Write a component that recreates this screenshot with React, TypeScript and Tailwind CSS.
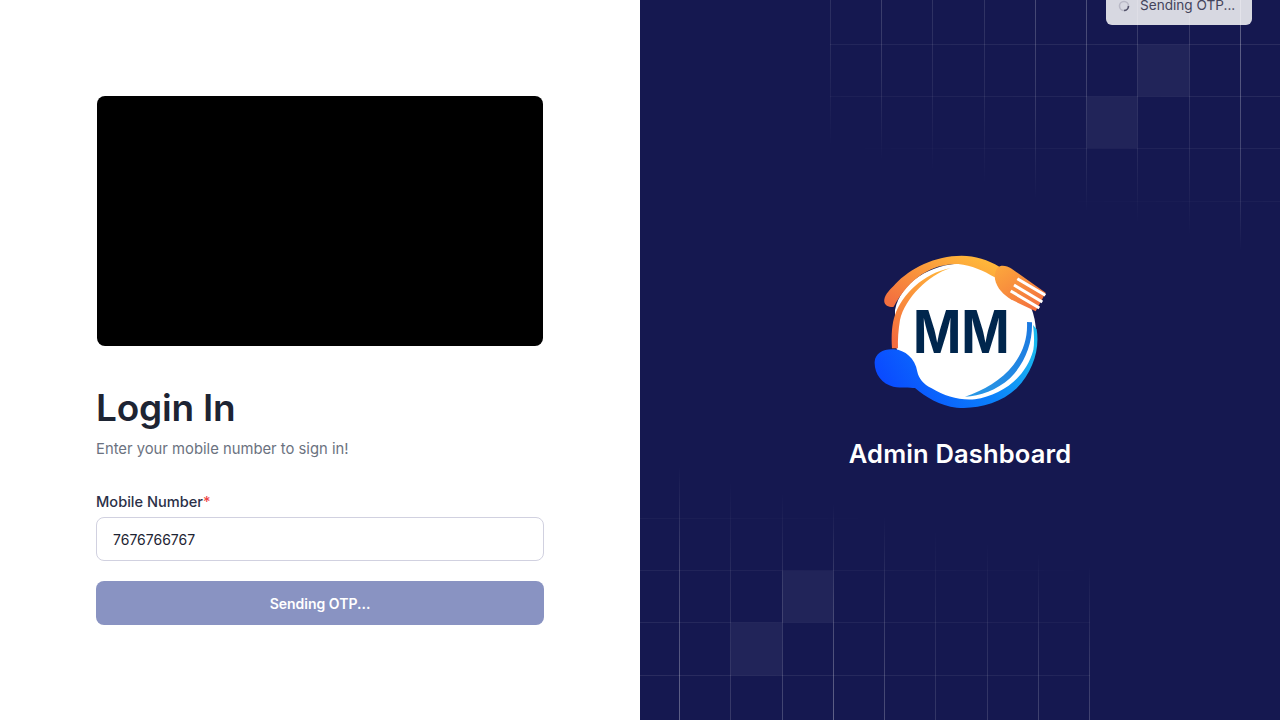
const font = "font-['Inter','Noto_Sans',sans-serif]";

function GridLines({ xs, ys, x0, x1, y0, y1, grad, id, alphas }: { xs: number[]; ys: number[]; x0: number; x1: number; y0: number; y1: number; grad: [number, number, number, number]; id: string; alphas: number[] }) {
  const w = x1 - x0;
  const h = y1 - y0;
  return (
    <svg className="absolute pointer-events-none" style={{ left: x0 - 640, top: y0 }} width={w} height={h} viewBox={`${x0} ${y0} ${w} ${h}`}>
      <defs>
        <linearGradient id={`${id}g`} gradientUnits="userSpaceOnUse" x1={grad[0]} y1={grad[1]} x2={grad[2]} y2={grad[3]}>
          <stop offset="0" stopColor="white" />
          <stop offset="0.55" stopColor="white" stopOpacity="0.6" />
          <stop offset="1" stopColor="white" stopOpacity="0" />
        </linearGradient>
        <mask id={`${id}m`} maskUnits="userSpaceOnUse" x={x0} y={y0} width={w} height={h}>
          <rect x={x0} y={y0} width={w} height={h} fill={`url(#${id}g)`} />
        </mask>
      </defs>
      <g mask={`url(#${id}m)`} shapeRendering="crispEdges">
        {xs.map((x, i) => (
          <line key={x} x1={x + 0.5} x2={x + 0.5} y1={y0} y2={y1} stroke="white" strokeOpacity={alphas[i]} />
        ))}
        {ys.map((y) => (
          <line key={y} x1={x0} x2={x1} y1={y + 0.5} y2={y + 0.5} stroke="white" strokeOpacity={0.09} />
        ))}
      </g>
    </svg>
  );
}

function Square({ x, y, w, h }: { x: number; y: number; w: number; h: number }) {
  return (
    <svg className="absolute pointer-events-none" style={{ left: x - 640, top: y }} width={w} height={h}>
      <rect width={w} height={h} fill="white" fillOpacity="0.055" />
    </svg>
  );
}

function Logo() {
  return (
    <svg width="200" height="180" viewBox="0 0 600 540" className="block">
      <defs>
        <linearGradient id="org" x1="0.05" y1="0.9" x2="0.8" y2="0.05">
          <stop offset="0" stopColor="#f36f3f" />
          <stop offset="1" stopColor="#ffb63a" />
        </linearGradient>
        <linearGradient id="org2" x1="0.3" y1="1" x2="0.7" y2="0">
          <stop offset="0" stopColor="#f46c3e" />
          <stop offset="1" stopColor="#ffb13a" />
        </linearGradient>
        <linearGradient id="fork" x1="0.1" y1="0" x2="0.8" y2="1">
          <stop offset="0" stopColor="#fca63c" />
          <stop offset="1" stopColor="#f36f3f" />
        </linearGradient>
        <linearGradient id="blu" x1="0" y1="0.6" x2="1" y2="0.3">
          <stop offset="0" stopColor="#0a48ff" />
          <stop offset="0.6" stopColor="#0b82fa" />
          <stop offset="1" stopColor="#1ab9ee" />
        </linearGradient>
        <linearGradient id="blu2" x1="0" y1="1" x2="1" y2="0">
          <stop offset="0" stopColor="#2a9ae6" />
          <stop offset="1" stopColor="#1b78e0" />
        </linearGradient>
      </defs>
      <path d="M105 210 C120 130 210 70 315 70 C430 70 528 160 528 280 C528 400 430 490 315 490 C200 490 105 400 105 280 Z" fill="white" />
      <path d="M73 178 C76 160 92 148 106 132 C150 85 225 47 305 47 C345 47 385 60 418 80 L404 112 C370 92 335 76 295 72 C220 70 150 110 101 200 C85 204 70 195 73 178 Z" fill="url(#org)" />
      <path d="M272 84 C205 105 135 175 120 240 C115 270 113 300 114 325 L96 325 C93 285 96 250 105 225 C125 165 190 100 272 84 Z" fill="url(#org2)" />
      <path d="M412 84 C424 72 440 78 455 86 L557 158 L527 214 L452 178 C432 165 410 145 405 118 C403 104 406 92 412 84 Z" fill="url(#fork)" />
      <path d="M472 116 L556 166 M462 135 L547 186 M452 153 L538 204" stroke="white" strokeWidth="9" fill="none" />
      <path d="M44 365 C46 340 70 326 102 328 C135 330 165 355 172 395 C176 415 190 432 215 445 C255 470 300 482 345 478 C420 465 495 420 520 330 C523 310 523 285 519 255 L530 268 C540 330 518 395 470 445 C420 492 350 508 290 503 C240 498 195 470 165 444 C150 442 125 445 100 440 C65 432 42 400 44 365 Z" fill="url(#blu)" />
      <path d="M501 246 L516 247 C518 310 495 370 450 415 C410 450 360 470 315 470 C370 452 425 420 460 375 C490 335 503 295 501 246 Z" fill="url(#blu2)" />
      <text x="304" y="340" textAnchor="middle" fill="#00264d" fontFamily="'Inter',sans-serif" fontWeight="700" fontSize="176" textLength="290" lengthAdjust="spacingAndGlyphs">MM</text>
    </svg>
  );
}

export default function App() {
  return (
    <div className={`flex w-[1280px] h-[720px] overflow-hidden bg-white ${font}`}>
      <div className="w-[640px] h-full flex flex-col px-24 pt-24">
        <div className="mx-px h-[250px] bg-black rounded-lg" />
        <h1 className="mt-[38px] text-[37px] leading-[48px] font-semibold text-[#1d2433] tracking-[-0.2px]">Login In</h1>
        <p className="mt-[5px] text-[14.8px] leading-[24px] text-[#6b7280]">Enter your mobile number to sign in!</p>
        <label className="mt-[30px] text-[14.6px] leading-[22px] font-medium text-[#2b3048]">
          Mobile Number<span className="text-[#ef4444]">*</span>
        </label>
        <input
          readOnly
          value="7676766767"
          className="mt-[4px] h-[44px] w-full rounded-lg border border-[#d1d1e0] bg-white px-4 text-[14px] text-[#1d2433] outline-none"
        />
        <button className="mt-[20px] h-[44px] w-full rounded-lg bg-[#8993c2] text-[14px] font-semibold text-white">Sending OTP...</button>
      </div>
      <div className="relative w-[640px] h-full overflow-hidden bg-[#151850] flex flex-col items-center justify-center pb-[11px]">
        <GridLines id="tr" xs={[830, 881, 932, 984, 1035, 1086, 1137, 1189, 1240]} ys={[44, 96, 148, 201]} x0={830} x1={1280} y0={0} y1={262} grad={[1035, 0, 988, 189]} alphas={[0.13, 0.2, 0.13, 0.13, 0.22, 0.24, 0.16, 0.14, 0.3]} />
        <GridLines id="bl" xs={[679, 730, 782, 833, 884, 935, 987, 1038, 1089]} ys={[518, 570, 622, 675]} x0={640} x1={1090} y0={462} y1={720} grad={[834, 722, 884, 514]} alphas={[0.3, 0.14, 0.2, 0.32, 0.24, 0.14, 0.16, 0.22, 0.24]} />
        <Square x={1138} y={45} w={51} h={51} />
        <Square x={1087} y={97} w={50} h={51} />
        <Square x={782} y={571} w={51} h={51} />
        <Square x={731} y={623} w={51} h={52} />
        <Logo />
        <h2 className="mt-[18px] text-[25.5px] leading-[32px] font-semibold text-white tracking-[0.15px]">Admin Dashboard</h2>
        <div className="absolute right-[28px] top-[-14px] flex h-[39px] w-[146px] items-center gap-[10px] rounded-md bg-white/83 pl-[12px] text-[13.6px] text-[#44445c]">
          <svg width="12" height="12" viewBox="0 0 12 12">
            <circle cx="6" cy="6" r="4.5" fill="none" stroke="#b9b9c6" strokeWidth="1.6" />
            <path d="M10.5 6 A4.5 4.5 0 0 1 6 10.5" fill="none" stroke="#55556c" strokeWidth="1.6" />
          </svg>
          <span>Sending OTP...</span>
        </div>
      </div>
    </div>
  );
}
